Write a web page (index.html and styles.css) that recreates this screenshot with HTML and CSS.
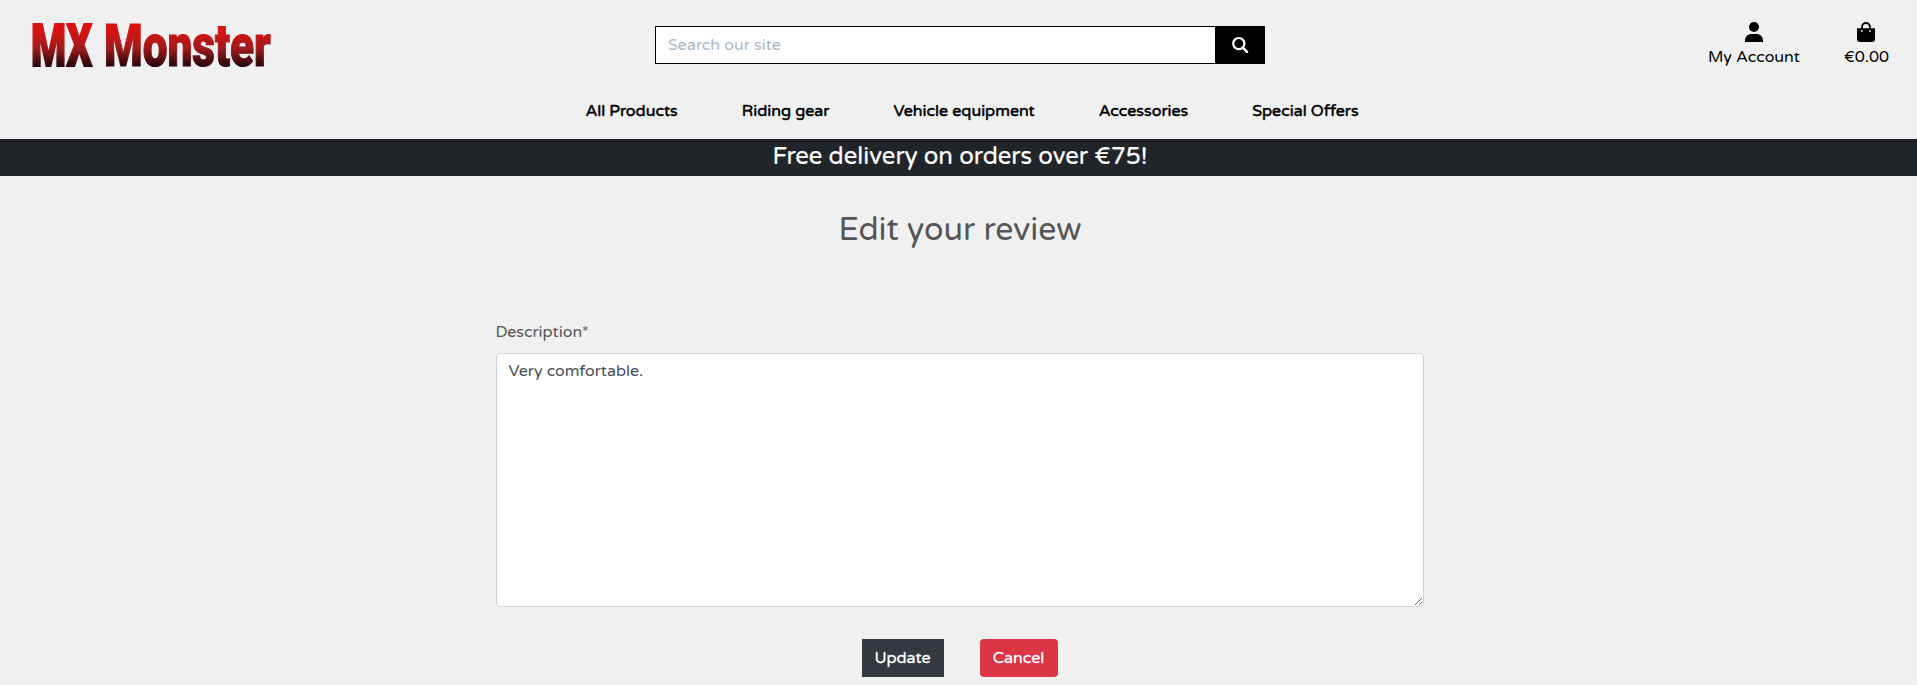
FILE: index.html
```
<!DOCTYPE html>
<html lang="en">
<head>
<meta charset="utf-8">
<title>MX Monster</title>
<link rel="stylesheet" href="styles.css">
</head>
<body>
<header class="header">
  <div class="topbar">
    <a class="logo" aria-label="MX Monster">
      <svg width="280" height="84" viewBox="0 0 280 84">
        <defs>
          <linearGradient id="red" gradientUnits="userSpaceOnUse" x1="0" y1="-43" x2="0" y2="0">
            <stop offset="0" stop-color="#e01010"/><stop offset=".25" stop-color="#d01414"/>
            <stop offset=".6" stop-color="#a01a1c"/><stop offset="1" stop-color="#2a060a"/>
          </linearGradient>
        </defs>
        <g class="logo-text" fill="url(#red)" stroke="url(#red)">
          <text class="logo-mx" transform="translate(31 65.500) scale(.668 1)">MX</text>
          <text transform="translate(104 65.500) scale(.735 1)">Monster</text>
        </g>
      </svg>
    </a>
    <form class="search">
      <input class="search-input" type="text" placeholder="Search our site">
      <button class="search-button" type="button" aria-label="Search">
        <svg width="18" height="18" viewBox="0 0 18 18"><circle cx="7.800" cy="7.600" r="5.600" fill="none" stroke="#fff" stroke-width="2.200"/><path d="M11.800 11.600 16 15.800" stroke="#fff" stroke-width="2.600" stroke-linecap="round"/></svg>
      </button>
    </form>
    <div class="account">
      <a class="account-link">
        <svg width="18" height="20" viewBox="0 0 18 20"><circle cx="9" cy="5" r="5"/><path d="M0 20v-1.500C0 14.500 3 12 6.500 12h5c3.500 0 6.500 2.500 6.500 6.500V20z"/></svg>
        <span class="account-name">My Account</span>
      </a>
      <a class="account-link">
        <svg width="18" height="20" viewBox="0 0 18 20"><path d="M5 8V5a4 4 0 0 1 8 0v3" fill="none" stroke="#000" stroke-width="1.800"/><path d="M0 6.200h18V17a3 3 0 0 1-3 3H3a3 3 0 0 1-3-3z"/><circle cx="5" cy="9" r=".9" fill="#f0f0f0"/><circle cx="13" cy="9" r=".9" fill="#f0f0f0"/></svg>
        <span class="account-total">€0.00</span>
      </a>
    </div>
  </div>
  <nav class="nav">
    <a>All Products</a>
    <a>Riding gear</a>
    <a>Vehicle equipment</a>
    <a>Accessories</a>
    <a>Special Offers</a>
  </nav>
</header>
<div class="banner"><span>Free delivery on orders over €75!</span></div>
<main class="content">
  <h2 class="title">Edit your review</h2>
  <form class="form">
    <label class="label" for="description">Description*</label>
    <textarea class="description" id="description">Very comfortable.</textarea>
    <div class="actions">
      <button class="button update" type="button">Update</button>
      <button class="button cancel" type="button">Cancel</button>
    </div>
  </form>
</main>
</body>
</html>
```
FILE: styles.css
```
* { box-sizing: border-box; }
body {
  margin: 0;
  height: 685px;
  overflow: hidden;
  background: #f0f0f0;
  color: #555;
  font: 16px/24px "Varela Round", "Noto Sans", sans-serif;
}
.header { height: 139px; color: #000; }
.topbar {
  height: 90px;
  display: grid;
  grid-template-columns: 655px 610px 1fr;
  align-items: start;
}
.logo svg, .account svg { display: block; }
.logo-text {
  font: 900 60px Roboto, sans-serif;
  stroke-width: 1.2;
}
.logo-mx { stroke-width: 2; }
.search { display: flex; height: 38px; margin-top: 26px; }
.search-input {
  flex: 1;
  min-width: 0;
  border: 1px solid #000;
  border-right: 0;
  border-radius: 0;
  padding: 0 12px;
  font: inherit;
  background: #fff;
}
.search-input::placeholder { color: #aab7c4; opacity: 1; }
.search-button {
  width: 50px;
  border: 0;
  padding: 0;
  background: #000;
  display: flex;
  align-items: center;
  justify-content: center;
}
.account {
  display: flex;
  justify-content: flex-end;
  gap: 44px;
  padding: 22px 28px 0 0;
}
.account-link { display: flex; flex-direction: column; align-items: center; gap: 3px; }
.nav {
  display: flex;
  justify-content: center;
  gap: 64px;
  padding: 9px 0 0 27px;
  -webkit-text-stroke: .5px #000;
}
.nav a { white-space: nowrap; }
.banner {
  height: 37px;
  padding-left: 3px;
  background: #212529;
  color: #fff;
  font-size: 24px;
  line-height: 36px;
  text-align: center;
  -webkit-text-stroke: .2px #fff;
}
.title {
  margin: 0;
  padding: 35px 0 0 3px;
  font-size: 32px;
  line-height: 38px;
  font-weight: 400;
  text-align: center;
}
.content { padding-left: 2px; }
.title { padding-left: 1px; }
.form { width: 928px; margin: 71px auto 0; }
.label { display: block; margin-bottom: 9px; }
.description {
  display: block;
  width: 100%;
  height: 254px;
  border: 1px solid #ced4da;
  border-radius: 4px;
  padding: 5px 12px;
  background: #fff;
  color: #495057;
  font: inherit;
  outline: 0;
}
.actions { display: flex; justify-content: center; gap: 36px; margin-top: 32px; }
.button {
  height: 38px;
  border: 0;
  padding: 0;
  color: #fff;
  font: inherit;
  -webkit-text-stroke: .3px #fff;
}
.update { width: 82px; background: #343a40; }
.cancel { width: 78px; background: #dc3545; border-radius: 4px; }
```
